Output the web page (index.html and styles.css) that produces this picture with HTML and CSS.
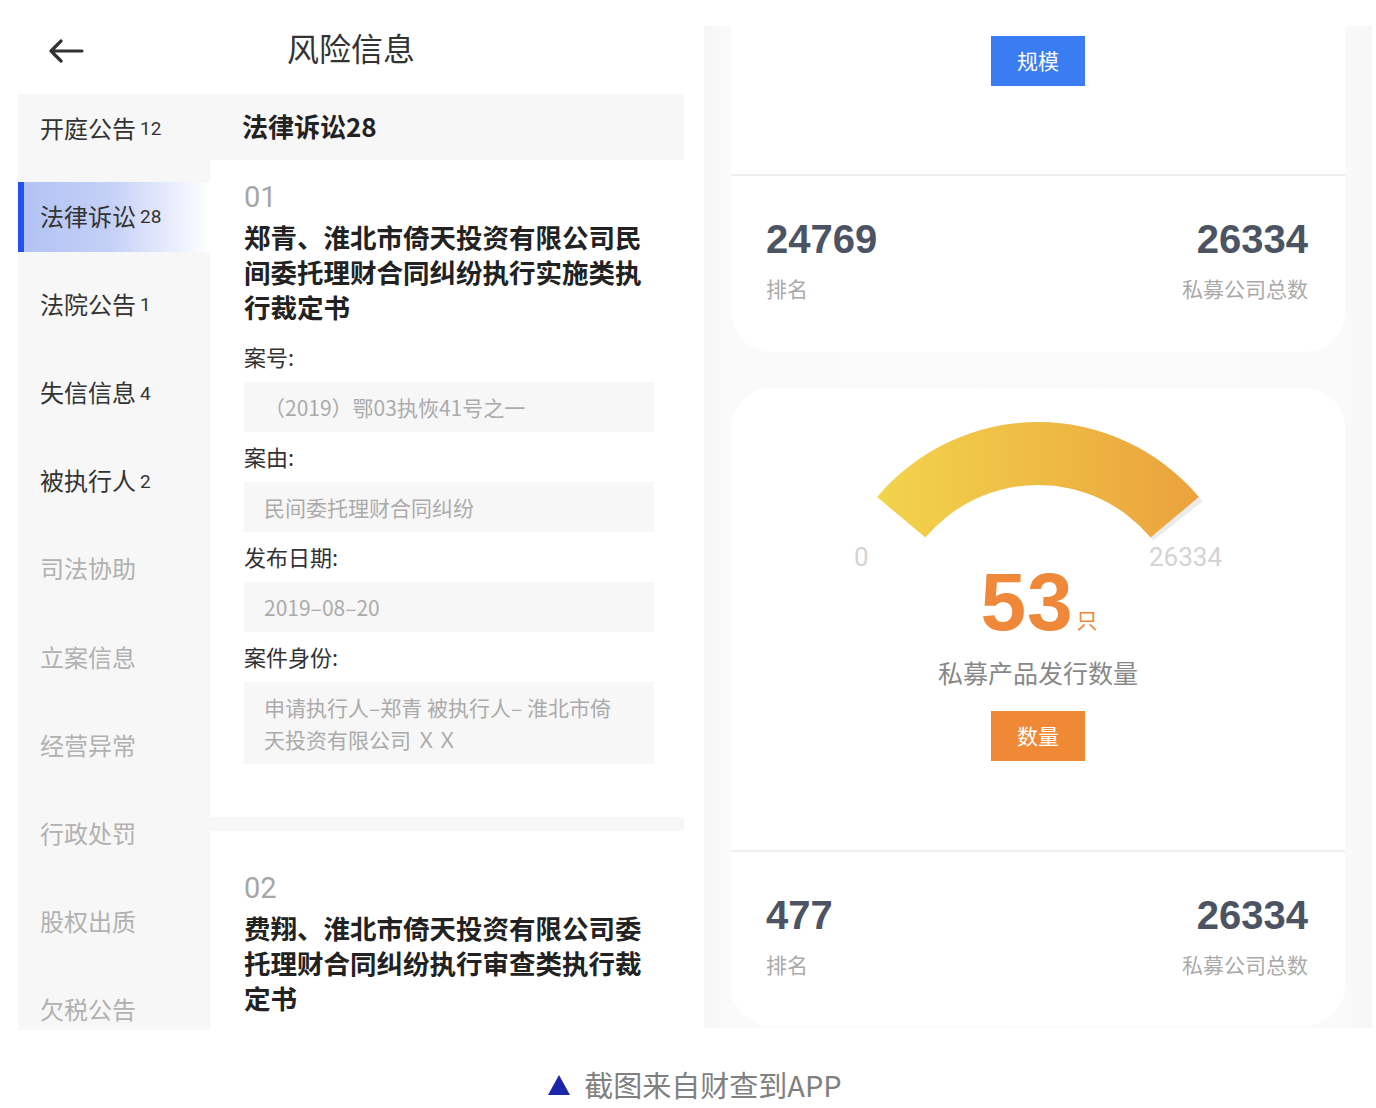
FILE: index.html
```html
<!DOCTYPE html>
<html lang="zh-CN">
<head>
<meta charset="utf-8">
<title>风险信息</title>
<link rel="stylesheet" href="styles.css">
</head>
<body>
<div class="page">
  <div class="shots">
    <section class="phone-left">
      <header class="topbar">
        <svg class="back" width="36" height="24" viewBox="0 0 36 24" aria-hidden="true">
          <path d="M34 12H3M13 2L3 12l10 10" fill="none" stroke="#333" stroke-width="3.2" stroke-linecap="round" stroke-linejoin="round"/>
        </svg>
        <h1 class="title">风险信息</h1>
      </header>
      <div class="body">
        <nav class="sidebar">
          <div class="nav-item">开庭公告<span class="num">12</span></div>
          <div class="nav-item active">法律诉讼<span class="num">28</span></div>
          <div class="nav-item">法院公告<span class="num">1</span></div>
          <div class="nav-item">失信信息<span class="num">4</span></div>
          <div class="nav-item">被执行人<span class="num">2</span></div>
          <div class="nav-item muted">司法协助</div>
          <div class="nav-item muted">立案信息</div>
          <div class="nav-item muted">经营异常</div>
          <div class="nav-item muted">行政处罚</div>
          <div class="nav-item muted">股权出质</div>
          <div class="nav-item muted">欠税公告</div>
        </nav>
        <main class="content">
          <div class="content-head">法律诉讼28</div>
          <article class="case first">
            <div class="case-no">01</div>
            <h2 class="case-title">郑青、淮北市倚天投资有限公司民间委托理财合同纠纷执行实施类执行裁定书</h2>
            <div class="field-label">案号:</div>
            <div class="field-box">（2019）鄂03执恢41号之一</div>
            <div class="field-label">案由:</div>
            <div class="field-box">民间委托理财合同纠纷</div>
            <div class="field-label">发布日期:</div>
            <div class="field-box">2019–08–20</div>
            <div class="field-label">案件身份:</div>
            <div class="field-box multi">申请执行人–郑青 被执行人– 淮北市倚<br>天投资有限公司 ＸＸ</div>
          </article>
          <div class="sep"></div>
          <article class="case second">
            <div class="case-no">02</div>
            <h2 class="case-title">费翔、淮北市倚天投资有限公司委托理财合同纠纷执行审查类执行裁定书</h2>
          </article>
        </main>
      </div>
    </section>

    <section class="phone-right">
      <div class="card card-top">
        <div class="card-upper upper-small">
          <div class="btn btn-blue">规模</div>
        </div>
        <div class="stats">
          <div class="stat">
            <div class="stat-num">24769</div>
            <div class="stat-label">排名</div>
          </div>
          <div class="stat right">
            <div class="stat-num">26334</div>
            <div class="stat-label">私募公司总数</div>
          </div>
        </div>
      </div>

      <div class="card card-bottom">
        <div class="card-upper upper-gauge">
          <svg class="gauge" width="440" height="130" viewBox="0 0 440 130" aria-hidden="true">
            <defs>
              <linearGradient id="gg" x1="0" y1="0" x2="1" y2="0">
                <stop offset="0" stop-color="#f2d44c"/>
                <stop offset="1" stop-color="#eba23d"/>
              </linearGradient>
            </defs>
            <path d="M380.87 85.01 A210 210 0 0 1 384.5 89.4 L335.2 128.6 A147 147 0 0 0 332.61 125.51 Z" fill="#ebebeb"/>
            <path d="M59.13 85.01 A210 210 0 0 1 380.87 85.01 L332.61 125.51 A147 147 0 0 0 107.39 125.51 Z" fill="url(#gg)"/>
          </svg>
          <div class="gauge-scale"><span>0</span><span>26334</span></div>
          <div class="big-value"><span class="big-num">53</span><span class="big-unit">只</span></div>
          <div class="gauge-caption">私募产品发行数量</div>
          <div class="btn btn-orange">数量</div>
        </div>
        <div class="stats">
          <div class="stat">
            <div class="stat-num">477</div>
            <div class="stat-label">排名</div>
          </div>
          <div class="stat right">
            <div class="stat-num">26334</div>
            <div class="stat-label">私募公司总数</div>
          </div>
        </div>
      </div>
    </section>
  </div>

  <footer class="caption">
    <span class="tri"></span>
    <span class="caption-text">截图来自财查到APP</span>
  </footer>
</div>
</body>
</html>
```

FILE: styles.css
```css
* { box-sizing: border-box; }

html, body {
  margin: 0;
  padding: 0;
  background: #ffffff;
}

body {
  font-family: "Noto Sans CJK SC", "Noto Sans", sans-serif;
  color: #333333;
  width: 1376px;
  height: 1108px;
  overflow: hidden;
}

.page {
  display: flex;
  flex-direction: column;
}

.shots {
  display: flex;
  padding-left: 18px;
  gap: 20px;
  align-items: flex-start;
}

/* ---------- Left phone ---------- */
.phone-left {
  width: 666px;
  height: 1030px;
  display: flex;
  flex-direction: column;
  overflow: hidden;
  background: #ffffff;
}

.topbar {
  height: 94px;
  flex: none;
  display: flex;
  align-items: center;
  justify-content: center;
  position: relative;
}

.back {
  position: absolute;
  left: 30px;
  top: 39px;
}

.title {
  margin: 0;
  font-size: 32px;
  font-weight: 400;
  color: #333333;
  line-height: 1;
}

.body {
  flex: 1;
  display: flex;
  min-height: 0;
}

.sidebar {
  width: 192px;
  flex: none;
  background: #f7f7f7;
  display: flex;
  flex-direction: column;
  gap: 18.2px;
}

.nav-item {
  height: 70px;
  flex: none;
  display: flex;
  align-items: center;
  padding-left: 22px;
  padding-bottom: 4px;
  font-size: 24px;
  color: #333333;
  white-space: nowrap;
}

.nav-item .num {
  font-family: "Roboto", "Liberation Sans", sans-serif;
  font-size: 19px;
  margin-left: 4px;
  margin-top: 3px;
}

.nav-item.active {
  background: linear-gradient(to right, #b2c3f4 0%, #c3cff6 45%, #ffffff 100%);
  border-left: 6px solid #2452f2;
  padding-left: 16px;
}

.nav-item.muted {
  color: #b1b1b1;
}

.content {
  flex: 1;
  display: flex;
  flex-direction: column;
  background: #ffffff;
}

.content-head {
  height: 66px;
  flex: none;
  background: #f7f7f7;
  display: flex;
  align-items: center;
  padding-left: 32px;
  padding-bottom: 4px;
  font-size: 26px;
  font-weight: 700;
  color: #222222;
}

.case {
  padding-left: 34px;
  padding-right: 30px;
}

.case.first {
  padding-top: 16px;
  padding-bottom: 53px;
}

.case.second {
  padding-top: 36px;
}

.case-no {
  font-family: "Roboto", "Liberation Sans", sans-serif;
  font-size: 29px;
  line-height: 43px;
  color: #a6a6a6;
}

.case-title {
  margin: 0;
  width: 410px;
  font-size: 26.5px;
  line-height: 35px;
  font-weight: 700;
  color: #222222;
  padding-bottom: 8px;
}

.field-label {
  height: 50px;
  display: flex;
  align-items: center;
  font-size: 22px;
  color: #333333;
  width: 410px;
  padding-bottom: 2px;
}

.field-box {
  width: 410px;
  height: 50px;
  background: #f7f7f7;
  display: flex;
  align-items: center;
  padding-left: 20px;
  font-size: 21px;
  color: #ababab;
  white-space: nowrap;
}

.field-box.multi {
  height: 82px;
  display: block;
  padding-top: 9px;
  line-height: 32px;
}

.sep {
  height: 14px;
  flex: none;
  background: #f7f7f7;
}

/* ---------- Right phone ---------- */
.phone-right {
  width: 668px;
  height: 1002px;
  margin-top: 26px;
  background: linear-gradient(to right, #f6f6f6 0%, #fafafa 4%, #fbfbfb 50%, #fafafa 96%, #f6f6f6 100%);
  padding: 0 27px;
  display: flex;
  flex-direction: column;
  gap: 36px;
}

.card {
  background: #ffffff;
  width: 614px;
  display: flex;
  flex-direction: column;
}

.card-top {
  height: 326px;
  border-radius: 0 0 40px 40px;
}

.card-bottom {
  height: 638px;
  border-radius: 40px;
}

.card-upper {
  display: flex;
  flex-direction: column;
  align-items: center;
  border-bottom: 2px solid #eeeeee;
  flex: none;
}

.upper-small {
  height: 150px;
  padding-top: 10px;
}

.upper-gauge {
  height: 464px;
  padding-top: 24px;
}

.btn {
  width: 94px;
  height: 50px;
  display: flex;
  align-items: center;
  justify-content: center;
  color: #ffffff;
  font-size: 21px;
  padding-bottom: 2px;
}

.btn-blue {
  background: #3a7cf2;
}

.btn-orange {
  background: #f08936;
  margin-top: 24px;
}

.gauge {
  display: block;
  flex: none;
}

.gauge-scale {
  width: 368px;
  align-self: flex-start;
  margin-left: 123px;
  display: flex;
  justify-content: space-between;
  font-family: "Roboto", "Liberation Sans", sans-serif;
  font-size: 26px;
  line-height: 30px;
  color: #d3d3d3;
}

.big-value {
  display: flex;
  align-items: flex-end;
  justify-content: center;
  height: 60px;
  padding-left: 2px;
}

.big-num {
  font-family: "Liberation Sans", "Roboto", sans-serif;
  font-size: 82px;
  font-weight: 700;
  line-height: 60px;
  color: #f0883a;
  letter-spacing: 1px;
}

.big-unit {
  font-size: 21px;
  line-height: 22px;
  color: #f0883a;
  margin-left: 3px;
  margin-bottom: 2px;
}

.gauge-caption {
  margin-top: 25px;
  font-size: 25px;
  line-height: 30px;
  color: #888888;
}

.stats {
  display: flex;
  justify-content: space-between;
  padding: 40px 37px 0 35px;
}

.stat {
  display: flex;
  flex-direction: column;
  gap: 11px;
}

.stat.right {
  align-items: flex-end;
}

.stat-num {
  font-family: "Liberation Sans", "Roboto", sans-serif;
  font-size: 40px;
  font-weight: 700;
  line-height: 46px;
  color: #4c5464;
}

.stat-label {
  font-size: 21px;
  line-height: 30px;
  color: #aaaaaa;
}

/* ---------- Caption ---------- */
.caption {
  margin-top: 36px;
  display: flex;
  align-items: center;
  justify-content: center;
  gap: 14px;
  padding-left: 14px;
}

.tri {
  width: 0;
  height: 0;
  border-left: 11px solid transparent;
  border-right: 11px solid transparent;
  border-bottom: 20px solid #1b27a8;
  margin-top: 2px;
}

.caption-text {
  font-size: 29px;
  line-height: 36px;
  color: #808080;
}
```
